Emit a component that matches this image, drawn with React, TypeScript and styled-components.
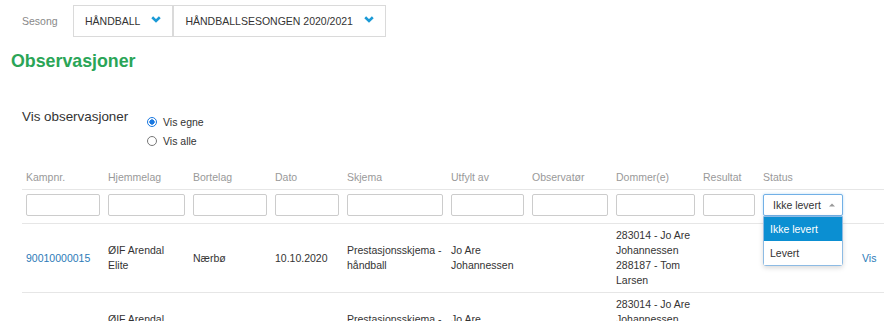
import React from "react";
import styled, { createGlobalStyle } from "styled-components";

const GlobalStyle = createGlobalStyle`
  html, body { margin: 0; padding: 0; background: #fff; }
  body {
    font-family: "Liberation Sans", Arial, sans-serif;
    color: #333;
    overflow: hidden;
  }
`;

const Page = styled.div`
  width: 884px;
  height: 321px;
  overflow: hidden;
  padding-top: 5px;
  box-sizing: border-box;
`;

const SeasonBar = styled.div`
  display: flex;
  align-items: stretch;
  height: 32px;
  padding-left: 22px;
`;

const SeasonLabel = styled.span`
  width: 51px;
  display: flex;
  align-items: center;
  font-size: 10.5px;
  color: #888;
`;

const SelectBox = styled.div`
  display: flex;
  align-items: center;
  gap: 11px;
  padding: 0 11px 0 11px;
  border: 1px solid #dadada;
  font-size: 10.5px;
  color: #333;
  text-transform: uppercase;
`;

const ChevronIcon = styled.svg`
  display: block;
  margin-bottom: 3px;
`;

const Heading = styled.h1`
  margin: 14px 0 0 11px;
  font-size: 17.8px;
  line-height: 20px;
  font-weight: bold;
  color: #2aa557;
`;

const ViewFilter = styled.div`
  display: flex;
  align-items: flex-start;
  margin-top: 37.6px;
  padding-left: 22px;
`;

const ViewLabel = styled.div`
  width: 125px;
  font-size: 13.4px;
  line-height: 16px;
  color: #333;
`;

const RadioGroup = styled.div`
  display: flex;
  flex-direction: column;
  margin-top: 3.6px;
`;

const RadioRow = styled.label`
  display: flex;
  align-items: center;
  gap: 6px;
  height: 19px;
  font-size: 10.5px;
  color: #333;
`;

const Radio = styled.input`
  appearance: none;
  -webkit-appearance: none;
  margin: 0;
  width: 10px;
  height: 10px;
  box-sizing: border-box;
  border-radius: 50%;
  border: 1px solid #777;
  background: #fff;
  &:checked {
    border-color: #1a78e0;
    background: radial-gradient(circle, #1a78e0 0 2.4px, #fff 2.9px);
  }
`;

const TableWrap = styled.div`
  padding-left: 22px;
  margin-top: 16px;
`;

const Table = styled.table`
  width: 100%;
  border-collapse: separate;
  border-spacing: 0;
  table-layout: fixed;
  font-size: 10.5px;
  line-height: 15px;
`;

const HeadCell = styled.th`
  text-align: left;
  font-weight: normal;
  color: #999;
  padding: 4px;
  border-bottom: 1px solid #e6e6e6;
`;

const FilterCell = styled.td`
  padding: 4px 4px 7px;
  border-bottom: 1px solid #e6e6e6;
  vertical-align: top;
`;

const FilterInput = styled.input`
  display: block;
  width: 100%;
  height: 22px;
  box-sizing: border-box;
  border: 1px solid #cccccc;
  border-radius: 2px;
  padding: 0 4px;
  margin: 0;
  font: inherit;
  background: #fff;
`;

const StatusField = styled.div`
  position: relative;
  width: 80px;
`;

const StatusSelect = styled.div`
  height: 22px;
  box-sizing: border-box;
  border: 1px solid #72b0e6;
  border-radius: 2px;
  box-shadow: 0 0 3px rgba(102, 175, 233, 0.45);
  display: flex;
  align-items: center;
  justify-content: space-between;
  padding: 0 7px 0 9px;
  color: #333;
  background: #fff;
`;

const Dropdown = styled.ul`
  position: absolute;
  top: 22px;
  left: 0;
  width: 80px;
  box-sizing: border-box;
  margin: 0;
  padding: 0;
  list-style: none;
  background: #fff;
  border: 1px solid #8dbbe4;
  border-radius: 0 0 3px 3px;
  box-shadow: 0 2px 5px rgba(0, 0, 0, 0.15);
  z-index: 2;
`;

const Option = styled.li<{ $active?: boolean }>`
  height: 24px;
  line-height: 24px;
  padding-left: 6px;
  background: ${(p) => (p.$active ? "#0b8fd2" : "#fff")};
  color: ${(p) => (p.$active ? "#fff" : "#333")};
`;

const Cell = styled.td`
  padding: 4px;
  vertical-align: middle;
  border-bottom: 1px solid #e6e6e6;
  color: #333;
`;

const Link = styled.a`
  color: #2b7bb8;
  text-decoration: none;
`;

const Chevron = () => (
  <ChevronIcon width="10" height="7" viewBox="0 0 10 7">
    <path d="M1.2 1.3 L5 5 L8.8 1.3" fill="none" stroke="#1b9ad6" strokeWidth="2.6" />
  </ChevronIcon>
);

const UpArrow = () => (
  <svg width="6" height="4" viewBox="0 0 6 4">
    <polygon points="0,3.5 3,0.5 6,3.5" fill="#999" />
  </svg>
);

const columns = [
  { label: "Kampnr.", width: 82 },
  { label: "Hjemmelag", width: 85 },
  { label: "Bortelag", width: 82 },
  { label: "Dato", width: 72 },
  { label: "Skjema", width: 104 },
  { label: "Utfylt av", width: 81 },
  { label: "Observatør", width: 84 },
  { label: "Dommer(e)", width: 87 },
  { label: "Resultat", width: 60 },
  { label: "Status", width: 99 },
  { label: "", width: undefined as number | undefined },
];

const rows = [
  {
    id: "90010000015",
    home: "ØIF Arendal Elite",
    away: "Nærbø",
    date: "10.10.2020",
    form: "Prestasjonsskjema - håndball",
    filledBy: "Jo Are Johannessen",
    observer: "",
    referees: ["283014 - Jo Are Johannessen", "288187 - Tom Larsen"],
    result: "",
  },
  {
    id: "90010000016",
    home: "ØIF Arendal Elite",
    away: "Nærbø",
    date: "10.10.2020",
    form: "Prestasjonsskjema - håndball",
    filledBy: "Jo Are Johannessen",
    observer: "",
    referees: ["283014 - Jo Are Johannessen", "288187 - Tom Larsen"],
    result: "",
  },
];

export default function App() {
  return (
    <>
      <GlobalStyle />
      <Page>
        <SeasonBar>
          <SeasonLabel>Sesong</SeasonLabel>
          <SelectBox>
            HÅNDBALL <Chevron />
          </SelectBox>
          <SelectBox>
            HÅNDBALLSESONGEN 2020/2021 <Chevron />
          </SelectBox>
        </SeasonBar>

        <Heading>Observasjoner</Heading>

        <ViewFilter>
          <ViewLabel>Vis observasjoner</ViewLabel>
          <RadioGroup>
            <RadioRow>
              <Radio type="radio" name="vis" defaultChecked />
              Vis egne
            </RadioRow>
            <RadioRow>
              <Radio type="radio" name="vis" />
              Vis alle
            </RadioRow>
          </RadioGroup>
        </ViewFilter>

        <TableWrap>
          <Table>
            <colgroup>
              {columns.map((c, i) => (
                <col key={i} style={c.width ? { width: c.width } : undefined} />
              ))}
            </colgroup>
            <thead>
              <tr>
                {columns.map((c, i) => (
                  <HeadCell key={i}>{c.label}</HeadCell>
                ))}
              </tr>
              <tr>
                {columns.slice(0, 9).map((c, i) => (
                  <FilterCell key={i}>
                    <FilterInput type="text" aria-label={c.label} />
                  </FilterCell>
                ))}
                <FilterCell>
                  <StatusField>
                    <StatusSelect>
                      Ikke levert <UpArrow />
                    </StatusSelect>
                    <Dropdown>
                      <Option $active>Ikke levert</Option>
                      <Option>Levert</Option>
                    </Dropdown>
                  </StatusField>
                </FilterCell>
                <FilterCell />
              </tr>
            </thead>
            <tbody>
              {rows.map((r) => (
                <tr key={r.id}>
                  <Cell>
                    <Link href="#">{r.id}</Link>
                  </Cell>
                  <Cell>{r.home}</Cell>
                  <Cell>{r.away}</Cell>
                  <Cell>{r.date}</Cell>
                  <Cell>{r.form}</Cell>
                  <Cell>{r.filledBy}</Cell>
                  <Cell>{r.observer}</Cell>
                  <Cell>
                    {r.referees.map((d) => (
                      <div key={d}>{d}</div>
                    ))}
                  </Cell>
                  <Cell>{r.result}</Cell>
                  <Cell />
                  <Cell>
                    <Link href="#">Vis</Link>
                  </Cell>
                </tr>
              ))}
            </tbody>
          </Table>
        </TableWrap>
      </Page>
    </>
  );
}
